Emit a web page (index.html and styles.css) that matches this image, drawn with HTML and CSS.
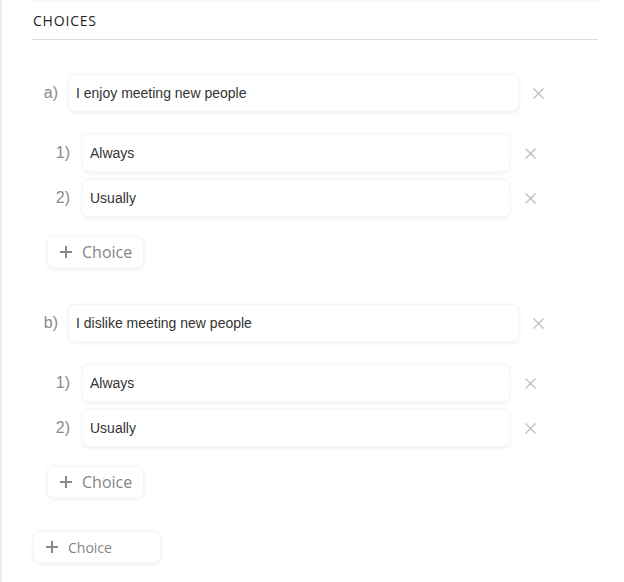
FILE: index.html
```html
<!DOCTYPE html>
<html>
<head>
<meta charset="utf-8">
<link rel="stylesheet" href="styles.css">
</head>
<body>
<div class="page">
  <div class="panel">
    <div class="card-above"></div>
    <h2 class="heading">CHOICES</h2>
    <div class="questions">
      <div class="question">
        <div class="q-row">
          <span class="label q-label">a)</span>
          <div class="field q-field">I enjoy meeting new people</div>
          <span class="remove"><svg width="11" height="11" viewBox="0 0 11 11"><path d="M0.5 0.5L10.5 10.5M10.5 0.5L0.5 10.5" stroke="#bdbdbd" stroke-width="1.3" fill="none"/></svg></span>
        </div>
        <div class="subs">
          <div class="s-row">
            <span class="label s-label">1)</span>
            <div class="field s-field">Always</div>
            <span class="remove"><svg width="11" height="11" viewBox="0 0 11 11"><path d="M0.5 0.5L10.5 10.5M10.5 0.5L0.5 10.5" stroke="#bdbdbd" stroke-width="1.3" fill="none"/></svg></span>
          </div>
          <div class="s-row">
            <span class="label s-label">2)</span>
            <div class="field s-field">Usually</div>
            <span class="remove"><svg width="11" height="11" viewBox="0 0 11 11"><path d="M0.5 0.5L10.5 10.5M10.5 0.5L0.5 10.5" stroke="#bdbdbd" stroke-width="1.3" fill="none"/></svg></span>
          </div>
        </div>
        <button class="btn sub-btn"><svg width="12" height="12" viewBox="0 0 12 12"><path d="M6 0V12M0 6H12" stroke="#8a8a8a" stroke-width="2" fill="none"/></svg><span>Choice</span></button>
      </div>
      <div class="question">
        <div class="q-row">
          <span class="label q-label">b)</span>
          <div class="field q-field">I dislike meeting new people</div>
          <span class="remove"><svg width="11" height="11" viewBox="0 0 11 11"><path d="M0.5 0.5L10.5 10.5M10.5 0.5L0.5 10.5" stroke="#bdbdbd" stroke-width="1.3" fill="none"/></svg></span>
        </div>
        <div class="subs">
          <div class="s-row">
            <span class="label s-label">1)</span>
            <div class="field s-field">Always</div>
            <span class="remove"><svg width="11" height="11" viewBox="0 0 11 11"><path d="M0.5 0.5L10.5 10.5M10.5 0.5L0.5 10.5" stroke="#bdbdbd" stroke-width="1.3" fill="none"/></svg></span>
          </div>
          <div class="s-row">
            <span class="label s-label">2)</span>
            <div class="field s-field">Usually</div>
            <span class="remove"><svg width="11" height="11" viewBox="0 0 11 11"><path d="M0.5 0.5L10.5 10.5M10.5 0.5L0.5 10.5" stroke="#bdbdbd" stroke-width="1.3" fill="none"/></svg></span>
          </div>
        </div>
        <button class="btn sub-btn"><svg width="12" height="12" viewBox="0 0 12 12"><path d="M6 0V12M0 6H12" stroke="#8a8a8a" stroke-width="2" fill="none"/></svg><span>Choice</span></button>
      </div>
    </div>
    <button class="btn main-btn"><svg width="12" height="12" viewBox="0 0 12 12"><path d="M6 0V12M0 6H12" stroke="#8a8a8a" stroke-width="2" fill="none"/></svg><span>Choice</span></button>
  </div>
</div>
</body>
</html>
```
FILE: styles.css
```css
html, body {
  margin: 0;
  padding: 0;
  background: #fff;
}
.page {
  border-left: 2px solid #ececec;
  min-height: 582px;
  box-sizing: border-box;
  overflow: hidden;
}
.panel {
  margin-left: 30px;
  width: 566px;
}
.card-above {
  height: 20px;
  margin-top: -20px;
  box-shadow: 0 1px 3px rgba(0,0,0,0.06);
}
.heading {
  margin: 0;
  padding: 12px 0 9px 1px;
  font-family: "Open Sans", sans-serif;
  font-weight: 400;
  font-size: 14px;
  line-height: 18px;
  letter-spacing: 0.8px;
  color: #1e1e28;
  border-bottom: 1px solid #dcdcdc;
}
.questions {
  display: flex;
  flex-direction: column;
  gap: 36px;
  padding-top: 34px;
}
.question {
  display: flex;
  flex-direction: column;
  align-items: flex-start;
}
.q-row, .s-row {
  display: flex;
  align-items: center;
}
.label {
  font-family: "Liberation Sans", Arial, sans-serif;
  font-size: 16px;
  color: #8a8a8a;
  text-align: right;
}
.q-label {
  width: 26px;
  margin-right: 10px;
}
.s-label {
  width: 24px;
  margin-right: 12px;
}
.field {
  height: 38px;
  box-sizing: border-box;
  border: 1px solid #f6f6f6;
  border-radius: 7px;
  background: #fff;
  box-shadow: 0 1px 4px rgba(0,0,0,0.07);
  display: flex;
  align-items: center;
  padding-left: 7px;
  font-family: "Liberation Sans", Arial, sans-serif;
  font-size: 14px;
  color: #333;
}
.q-field {
  width: 451px;
}
.s-field {
  width: 428px;
}
.remove {
  display: flex;
  margin-left: 14px;
}
.s-row .remove {
  margin-left: 15px;
}
.subs {
  display: flex;
  flex-direction: column;
  gap: 7px;
  margin-top: 22px;
  margin-left: 14px;
}
.btn {
  display: inline-flex;
  align-items: center;
  gap: 10px;
  height: 32px;
  box-sizing: border-box;
  padding: 0 11px 0 12px;
  border: 1px solid #f6f6f6;
  border-radius: 7px;
  background: #fff;
  box-shadow: 0 1px 4px rgba(0,0,0,0.07);
  font-family: "Open Sans", sans-serif;
  color: #858585;
  cursor: pointer;
}
.sub-btn {
  margin-top: 19px;
  margin-left: 15px;
  font-size: 16px;
}
.main-btn {
  margin-top: 33px;
  margin-left: 1px;
  width: 128px;
  font-size: 14px;
}
```
